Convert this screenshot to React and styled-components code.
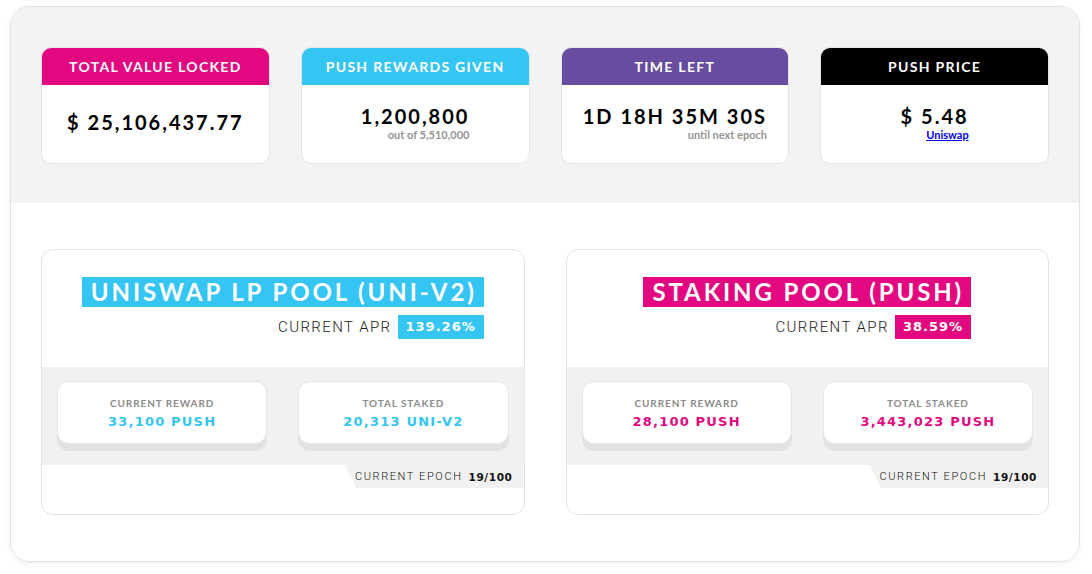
import styled, { createGlobalStyle } from "styled-components";

const GlobalStyle = createGlobalStyle`
  body {
    margin: 0;
    background: #fff;
    font-family: Lato, "Open Sans", sans-serif;
  }
`;

const Page = styled.div`
  padding: 6px 12px 12px 10px;
`;

const Frame = styled.div`
  border: 1px solid #e2e2e2;
  border-radius: 20px;
  overflow: hidden;
  box-shadow: 0 2px 6px rgba(0, 0, 0, 0.06);
`;

const TopSection = styled.div`
  background: #f3f3f3;
  padding: 40px 30px 39px 30px;
  display: grid;
  grid-template-columns: repeat(4, 1fr);
  gap: 31px;
`;

const StatCard = styled.div`
  background: #fff;
  border: 1px solid #e4e4e4;
  border-radius: 10px;
  overflow: hidden;
  height: 117px;
  box-sizing: border-box;
  display: flex;
  flex-direction: column;
`;

const StatHead = styled.div`
  background: ${(p) => p.$bg};
  color: #fff;
  height: 37px;
  flex-shrink: 0;
  display: flex;
  align-items: center;
  justify-content: center;
  font-weight: 700;
  font-size: 14px;
  letter-spacing: 1.3px;
`;

const StatBody = styled.div`
  flex: 1;
  display: flex;
  flex-direction: column;
  align-items: center;
  justify-content: center;
  padding-bottom: 4px;
`;

const StatValueWrap = styled.div`
  display: flex;
  flex-direction: column;
  align-items: ${(p) => p.$align || "center"};
`;

const StatValue = styled.div`
  font-size: 20px;
  font-weight: 700;
  letter-spacing: 2px;
  color: #000;
  line-height: 24px;
`;

const StatSub = styled.div`
  font-size: 11px;
  color: #949494;
  font-weight: 700;
  line-height: 13px;
`;

const Link = styled.a`
  font-size: 11px;
  color: #0000ee;
  text-decoration: underline;
  font-weight: 700;
  line-height: 13px;
`;

const BottomSection = styled.div`
  background: #fff;
  padding: 46px 30px 46px 30px;
  display: grid;
  grid-template-columns: 1fr 1fr;
  gap: 41px;
`;

const PoolCard = styled.div`
  border: 1px solid #e2e2e2;
  border-radius: 12px;
  height: 266px;
  box-sizing: border-box;
  overflow: hidden;
  display: flex;
  flex-direction: column;
`;

const PoolHead = styled.div`
  padding: 27px 0 0;
  height: 117px;
  flex-shrink: 0;
  box-sizing: border-box;
  display: flex;
  justify-content: center;
`;

const TitleBlock = styled.div`
  display: flex;
  flex-direction: column;
  align-items: flex-end;
  gap: 8px;
`;

const PoolTitle = styled.div`
  background: ${(p) => p.$bg};
  color: #fff;
  font-weight: 700;
  font-size: 24px;
  letter-spacing: 2.9px;
  line-height: 30px;
  padding: 0 7px 0 9px;
`;

const AprRow = styled.div`
  display: flex;
  align-items: center;
  gap: 6px;
`;

const AprLabel = styled.span`
  font-family: Roboto, sans-serif;
  font-weight: 300;
  font-size: 15px;
  letter-spacing: 1.4px;
  color: #222;
`;

const AprValue = styled.span`
  background: ${(p) => p.$bg};
  color: #fff;
  font-family: "DejaVu Sans", Verdana, sans-serif;
  font-weight: 700;
  font-size: 13px;
  letter-spacing: 1px;
  height: 24px;
  line-height: 24px;
  padding: 0 8px;
`;

const Band = styled.div`
  background: #f1f1f1;
  padding: 14px 15px 21px 15px;
  display: grid;
  grid-template-columns: 1fr 1fr;
  gap: 31px;
`;

const InfoCard = styled.div`
  background: #fff;
  border-radius: 12px;
  height: 63px;
  box-sizing: border-box;
  border: 1px solid #e6e6e6;
  box-shadow: 0 7px 0 #e2e2e2;
  display: flex;
  flex-direction: column;
  align-items: center;
  justify-content: center;
  gap: 5px;
`;

const InfoLabel = styled.div`
  font-size: 10px;
  color: #8a8a8a;
  letter-spacing: 0.9px;
  font-weight: 700;
`;

const InfoValue = styled.div`
  font-family: "DejaVu Sans", Verdana, sans-serif;
  font-weight: 700;
  font-size: 13px;
  letter-spacing: 1.2px;
  color: ${(p) => p.$color};
`;

const EpochRow = styled.div`
  display: flex;
  justify-content: flex-end;
`;

const EpochTab = styled.div`
  background: #f1f1f1;
  height: 23px;
  width: 178px;
  clip-path: polygon(0 0, 100% 0, 100% 100%, 6% 100%);
  display: flex;
  align-items: center;
  justify-content: flex-end;
  padding-right: 11px;
  box-sizing: border-box;
  gap: 6px;
`;

const EpochLabel = styled.span`
  font-family: Roboto, sans-serif;
  font-weight: 300;
  font-size: 11px;
  letter-spacing: 1.6px;
  color: #111;
`;

const EpochValue = styled.span`
  font-family: "DejaVu Sans", Verdana, sans-serif;
  font-weight: 700;
  font-size: 10.5px;
  letter-spacing: 0.6px;
  color: #111;
`;

const PINK = "#e20880";
const CYAN = "#35c5f3";
const PURPLE = "#674c9f";

const stats = [
  { title: "TOTAL VALUE LOCKED", bg: PINK, value: "$ 25,106,437.77" },
  { title: "PUSH REWARDS GIVEN", bg: CYAN, value: "1,200,800", sub: "out of 5,510,000", align: "flex-end" },
  { title: "TIME LEFT", bg: PURPLE, value: "1D 18H 35M 30S", sub: "until next epoch", align: "flex-end" },
  { title: "PUSH PRICE", bg: "#000", value: "$ 5.48", link: "Uniswap", align: "flex-end" },
];

const pools = [
  {
    title: "UNISWAP LP POOL (UNI-V2)",
    color: CYAN,
    apr: "139.26%",
    reward: "33,100 PUSH",
    staked: "20,313 UNI-V2",
  },
  {
    title: "STAKING POOL (PUSH)",
    color: PINK,
    apr: "38.59%",
    reward: "28,100 PUSH",
    staked: "3,443,023 PUSH",
  },
];

const App = () => {
  return (
    <Page>
      <GlobalStyle />
      <Frame>
        <TopSection>
          {stats.map((s) => (
            <StatCard key={s.title}>
              <StatHead $bg={s.bg}>{s.title}</StatHead>
              <StatBody>
                <StatValueWrap $align={s.align}>
                  <StatValue>{s.value}</StatValue>
                  {s.sub && <StatSub>{s.sub}</StatSub>}
                  {s.link && <Link href="#">{s.link}</Link>}
                </StatValueWrap>
              </StatBody>
            </StatCard>
          ))}
        </TopSection>
        <BottomSection>
          {pools.map((p) => (
            <PoolCard key={p.title}>
              <PoolHead>
                <TitleBlock>
                  <PoolTitle $bg={p.color}>{p.title}</PoolTitle>
                  <AprRow>
                    <AprLabel>CURRENT APR</AprLabel>
                    <AprValue $bg={p.color}>{p.apr}</AprValue>
                  </AprRow>
                </TitleBlock>
              </PoolHead>
              <Band>
                <InfoCard>
                  <InfoLabel>CURRENT REWARD</InfoLabel>
                  <InfoValue $color={p.color}>{p.reward}</InfoValue>
                </InfoCard>
                <InfoCard>
                  <InfoLabel>TOTAL STAKED</InfoLabel>
                  <InfoValue $color={p.color}>{p.staked}</InfoValue>
                </InfoCard>
              </Band>
              <EpochRow>
                <EpochTab>
                  <EpochLabel>CURRENT EPOCH</EpochLabel>
                  <EpochValue>19/100</EpochValue>
                </EpochTab>
              </EpochRow>
            </PoolCard>
          ))}
        </BottomSection>
      </Frame>
    </Page>
  );
};

export default App;
